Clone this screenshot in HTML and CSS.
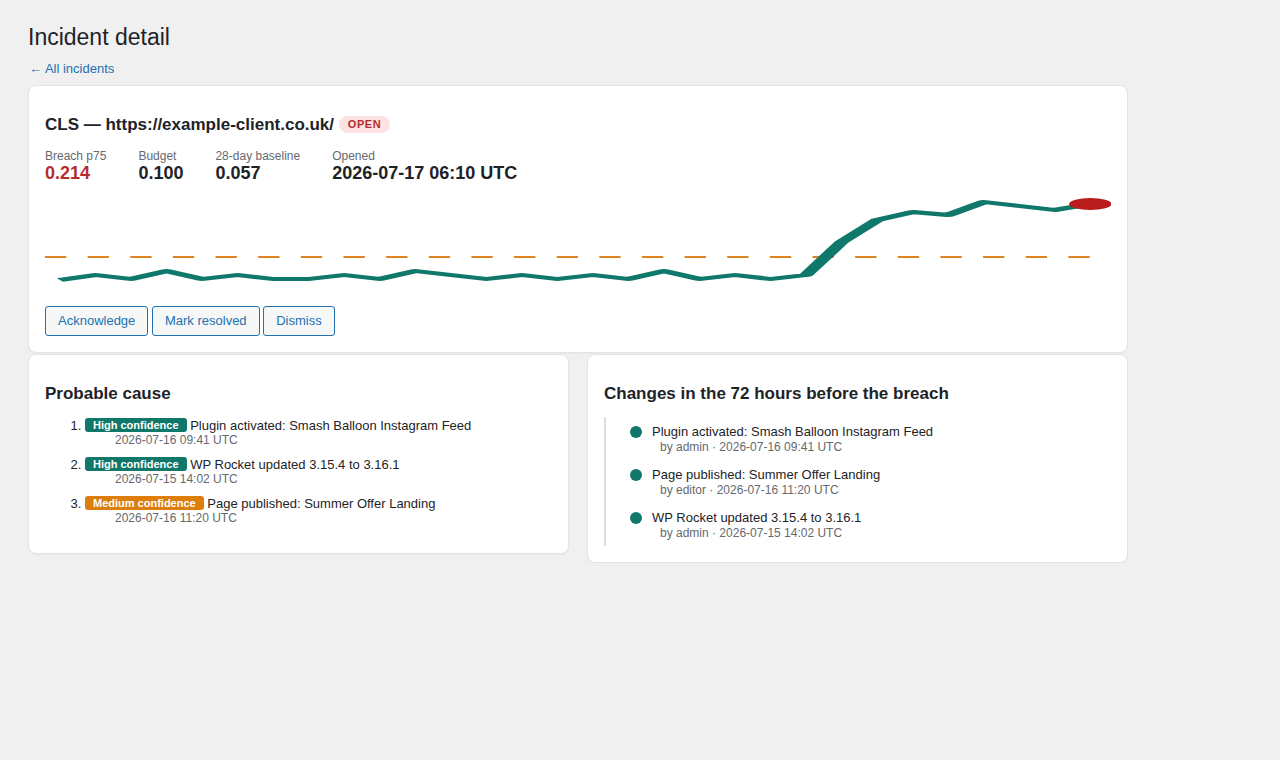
FILE: index.html
```html
<!DOCTYPE html>
<html>
<head>
    <title>Incident detail</title>
    <link rel="stylesheet" href="styles.css">
</head>
<body>
    <div class="wrap">
        <h1>Incident detail</h1>
        <a class="back-link" href="#">&larr; All incidents</a>

        <div class="card">
            <h2 class="incident-title">CLS &mdash; https://example-client.co.uk/ <span class="status status-open">Open</span></h2>

            <div class="metrics">
                <div class="metric">
                    <div class="metric-label">Breach p75</div>
                    <div class="metric-value breach">0.214</div>
                </div>
                <div class="metric">
                    <div class="metric-label">Budget</div>
                    <div class="metric-value">0.100</div>
                </div>
                <div class="metric">
                    <div class="metric-label">28-day baseline</div>
                    <div class="metric-value">0.057</div>
                </div>
                <div class="metric">
                    <div class="metric-label">Opened</div>
                    <div class="metric-value">2026-07-17 06:10 UTC</div>
                </div>
            </div>

            <svg class="sparkline" viewBox="0 0 300 100" preserveAspectRatio="none">
                <line class="budget-line" x1="0" y1="65" x2="300" y2="65"></line>
                <polyline class="trend-line" points="4.2,88 14.2,83 24.2,87 34.2,79 44.2,87 54.2,83 64.2,87 74.2,87 84.2,83 94.2,87 104.2,79 114.2,83 124.2,87 134.2,83 144.2,87 154.2,83 164.2,87 174.2,79 184.2,87 194.2,83 204.2,87 214.2,83 224.2,50 234.2,28 244.2,20 254.2,23 264.2,10 274.2,14 284.2,18 294.2,12"></polyline>
                <circle class="breach-point" cx="294.2" cy="12" r="6"></circle>
            </svg>

            <div class="actions">
                <button class="button">Acknowledge</button>
                <button class="button">Mark resolved</button>
                <button class="button">Dismiss</button>
            </div>
        </div>

        <div class="columns">
            <div class="card">
                <h2>Probable cause</h2>
                <ol class="causes">
                    <li>
                        <span class="confidence high">High confidence</span> Plugin activated: Smash Balloon Instagram Feed
                        <div class="cause-date">2026-07-16 09:41 UTC</div>
                    </li>
                    <li>
                        <span class="confidence high">High confidence</span> WP Rocket updated 3.15.4 to 3.16.1
                        <div class="cause-date">2026-07-15 14:02 UTC</div>
                    </li>
                    <li>
                        <span class="confidence medium">Medium confidence</span> Page published: Summer Offer Landing
                        <div class="cause-date">2026-07-16 11:20 UTC</div>
                    </li>
                </ol>
            </div>

            <div class="card">
                <h2>Changes in the 72 hours before the breach</h2>
                <ul class="timeline">
                    <li>
                        <span class="dot"></span>
                        <div>
                            <div class="change-title">Plugin activated: Smash Balloon Instagram Feed</div>
                            <div class="change-meta">by admin &middot; 2026-07-16 09:41 UTC</div>
                        </div>
                    </li>
                    <li>
                        <span class="dot"></span>
                        <div>
                            <div class="change-title">Page published: Summer Offer Landing</div>
                            <div class="change-meta">by editor &middot; 2026-07-16 11:20 UTC</div>
                        </div>
                    </li>
                    <li>
                        <span class="dot"></span>
                        <div>
                            <div class="change-title">WP Rocket updated 3.15.4 to 3.16.1</div>
                            <div class="change-meta">by admin &middot; 2026-07-15 14:02 UTC</div>
                        </div>
                    </li>
                </ul>
            </div>
        </div>
    </div>
</body>
</html>
```

FILE: styles.css
```css
body {
    margin: 0;
    background: #f0f0f1;
    color: #1d2327;
    font-family: 'Liberation Sans', Arial, sans-serif;
    font-size: 13px;
}
.wrap {
    max-width: 1100px;
    padding: 13px 0 0 28px;
}
h1 {
    margin: 0;
    padding: 9px 0 4px;
    font-size: 23px;
    font-weight: 400;
    line-height: 30px;
}
.back-link {
    display: block;
    width: fit-content;
    margin: 4px 0 7px 1px;
    color: #2271b1;
    text-decoration: none;
    line-height: 18px;
}
.card {
    background: #fff;
    border: 1px solid #e2e3e6;
    border-radius: 8px;
    padding: 0 16px 16px;
    box-shadow: 0 1px 2px rgba(0, 0, 0, 0.03);
}
.card h2 {
    margin: 28px 0 12px;
    font-size: 17px;
    font-weight: 700;
    line-height: 22px;
}
.card h2.incident-title {
    margin-bottom: 13px;
}
.status {
    display: inline-block;
    vertical-align: 2px;
    padding: 0 9px;
    border-radius: 9px;
    font-size: 11px;
    line-height: 17px;
    letter-spacing: 0.6px;
    text-transform: uppercase;
}
.status-open {
    background: #fce2e2;
    color: #b32d2e;
}
.metrics {
    display: flex;
    gap: 32px;
    margin-bottom: 8px;
}
.metric-label {
    color: #646970;
    font-size: 12px;
    line-height: 14px;
}
.metric-value {
    font-size: 18px;
    font-weight: 700;
    line-height: 21px;
}
.metric-value.breach {
    color: #b32d2e;
}
.sparkline {
    display: block;
    width: 100%;
    height: 100px;
    margin-bottom: 14px;
}
.budget-line {
    stroke: #dd8520;
    stroke-width: 2;
    stroke-dasharray: 6 6;
}
.trend-line {
    fill: none;
    stroke: #10786b;
    stroke-width: 4;
    stroke-linejoin: round;
}
.breach-point {
    fill: #b91c1c;
}
.actions .button {
    min-height: 30px;
    padding: 0 12px;
    background: #f6f7f7;
    border: 1px solid #2271b1;
    border-radius: 3px;
    color: #2271b1;
    font-family: inherit;
    font-size: 13px;
    line-height: 28px;
    cursor: pointer;
}
.actions .button:hover {
    background: #f0f0f1;
    color: #135e96;
}
.columns {
    display: grid;
    grid-template-columns: 1fr 1fr;
    gap: 18px;
    align-items: start;
    margin-top: 1px;
}
.causes {
    margin: 0;
    padding: 0 0 3px 40px;
}
.causes li {
    line-height: 17px;
    margin-bottom: 9px;
}
.confidence {
    display: inline-block;
    padding: 0 8px;
    border-radius: 3px;
    color: #fff;
    font-size: 11px;
    font-weight: 700;
    line-height: 14px;
    vertical-align: 1px;
}
.confidence.high {
    background: #10786b;
}
.confidence.medium {
    background: #dd7e0b;
}
.cause-date {
    margin: -1px 0 0 30px;
    color: #646970;
    font-size: 12px;
    line-height: 14px;
}
.timeline {
    list-style: none;
    margin: 0;
    padding: 6px 0 6px 24px;
    border-left: 2px solid #dcdcde;
}
.timeline li {
    display: flex;
    gap: 10px;
    margin-bottom: 12px;
}
.timeline li:last-child {
    margin-bottom: 0;
}
.dot {
    flex: none;
    width: 12px;
    height: 12px;
    margin-top: 3px;
    border-radius: 50%;
    background: #10786b;
}
.change-title {
    line-height: 17px;
}
.change-meta {
    margin-left: 8px;
    color: #646970;
    font-size: 12px;
    line-height: 14px;
}
```
